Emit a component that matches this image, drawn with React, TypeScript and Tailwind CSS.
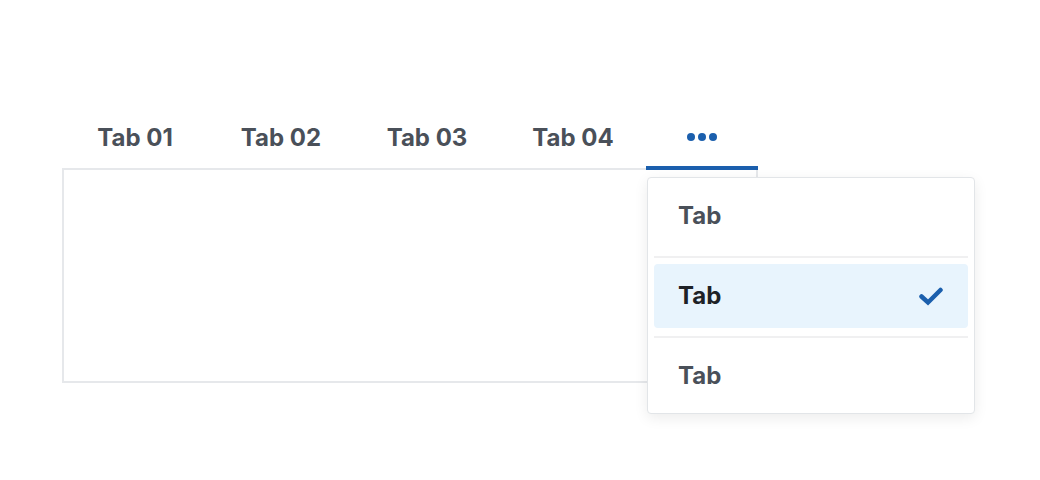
import { useState } from "react";

const tabs = ["Tab 01", "Tab 02", "Tab 03", "Tab 04"];
const menuItems = ["Tab", "Tab", "Tab"];

function Check() {
  return (
    <svg width="24" height="19" viewBox="0 0 24 19" fill="none">
      <path
        d="M2.5 9.5 L9 15.5 L21.5 3"
        stroke="#1b5fad"
        strokeWidth="4.5"
        strokeLinecap="round"
        strokeLinejoin="miter"
      />
    </svg>
  );
}

export default function App() {
  const [selected] = useState(1);

  return (
    <div
      className="min-h-[480px] w-[1040px] bg-white pt-[104px] pl-[62px]"
      style={{ fontFamily: "Inter, 'Noto Sans', sans-serif" }}
    >
      <div className="relative w-[696px]">
        <div className="relative z-10 flex h-[66px]">
          {tabs.map((t) => (
            <button
              key={t}
              className="flex w-[146px] items-center justify-center pt-[1px] text-[24px] font-bold text-[#4a5059]"
            >
              {t}
            </button>
          ))}
          <div className="relative">
            <button className="flex h-[66px] w-[112px] items-center justify-center gap-[3px] border-b-4 border-[#1b5fad] pt-[4px]">
              <span className="h-[8px] w-[8px] rounded-full bg-[#1b5fad]" />
              <span className="h-[8px] w-[8px] rounded-full bg-[#1b5fad]" />
              <span className="h-[8px] w-[8px] rounded-full bg-[#1b5fad]" />
            </button>
            <div className="absolute left-[1px] top-[73px] w-[328px] rounded-[4px] border border-[#e2e5e8] bg-white px-[6px] pt-[6px] pb-[5px] shadow-[0_4px_14px_rgba(0,0,0,0.08)]">
              {menuItems.map((m, i) => (
                <div key={i}>
                  {i > 0 && <div className="mt-[8px] mb-[6px] h-[2px] bg-[#f0f0f1]" />}
                  <div
                    className={
                      i === selected
                        ? "flex h-[64px] items-center justify-between rounded-[4px] bg-[#e8f4fd] pl-[24px] pr-[25px] text-[24px] font-bold text-[#1e2227]"
                        : "flex h-[64px] items-center justify-between pl-[24px] pr-[25px] text-[24px] font-bold text-[#4a5059]"
                    }
                  >
                    <span>{m}</span>
                    {i === selected && <Check />}
                  </div>
                </div>
              ))}
            </div>
          </div>
        </div>
        <div className="-mt-[2px] h-[215px] border-2 border-[#e6e8eb] bg-white" />
      </div>
    </div>
  );
}
